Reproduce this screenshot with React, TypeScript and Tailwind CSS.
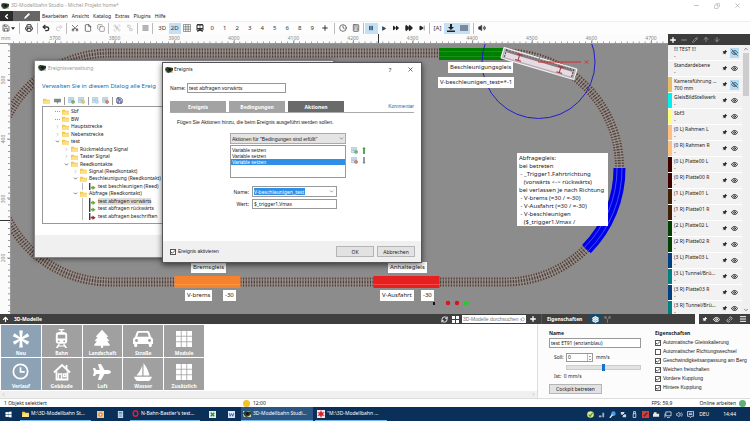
import React, { useState } from "react";
import {
  AlignJustify, ArrowDown, ArrowUp, Calculator, Check, ChevronDown, ChevronLeft, ChevronRight, ChevronUp, Clock,
  Copy, Eye, EyeOff, FastForward, File, Group, Link2, Menu, Minus, Pencil, Plus, Printer, Redo2, RefreshCw,
  Save, Scissors, Search, Settings, SkipForward, Split, Ungroup, Undo2, Volume2, X,
} from "lucide-react";
import { FaCar, FaPlane, FaTree, FaTrainSubway, FaPause, FaPlay, FaForward, FaWindows, FaThumbtack } from "react-icons/fa6";

type Layer = { name: string; sub?: string; color: string; hidden?: boolean };

const LAYERS: Layer[] = [
  { name: "!!! TEST !!!", color: "bg-[#f2f2f2]", hidden: true },
  { name: "Standardebene", color: "bg-[#f2f2f2]" },
  { name: "Kameraführung ...", sub: "700 mm", color: "bg-[#e8bd6a]", hidden: true },
  { name: "GleisBildStellwerk", color: "bg-[#00f0f0]" },
  { name: "Sbf3", color: "bg-[#ffff80]" },
  { name: "(0 L) Rahmen L", color: "bg-[#fdc080]" },
  { name: "(0 R) Rahmen R", color: "bg-[#fdc080]" },
  { name: "(0 L) Platte00 L", color: "bg-[#400000]" },
  { name: "(0 R) Platte00 R", color: "bg-[#400000]" },
  { name: "(1 L) Platte01 L", color: "bg-[#402000]" },
  { name: "(1 R) Platte01 R", color: "bg-[#402000]" },
  { name: "(2 L) Platte02 L", color: "bg-[#004000]" },
  { name: "(2 R) Platte02 R", color: "bg-[#004000]" },
  { name: "(3 L) Platte03 L", color: "bg-[#004080]" },
  { name: "(3 L) Tunnel/Brü...", color: "bg-[#008080]" },
  { name: "(3 R) Platte03 R", color: "bg-[#004080]" },
  { name: "(3 R) Tunnel/Brü...", color: "bg-[#008080]" },
];

type Node = { label: string; pad: string; kind: "folder" | "green" | "red"; open?: boolean; leaf?: boolean; selected?: boolean };

const TREE: Node[] = [
  { label: "Sbf", pad: "pl-[12px]", kind: "folder", leaf: true },
  { label: "BW", pad: "pl-[12px]", kind: "folder", leaf: true },
  { label: "Hauptstrecke", pad: "pl-[12px]", kind: "folder" },
  { label: "Nebenstrecke", pad: "pl-[12px]", kind: "folder" },
  { label: "test", pad: "pl-[12px]", kind: "folder", open: true },
  { label: "Rückmeldung Signal", pad: "pl-[21px]", kind: "folder" },
  { label: "Taster Signal", pad: "pl-[21px]", kind: "folder" },
  { label: "Reedkontakte", pad: "pl-[21px]", kind: "folder", open: true },
  { label: "Signal (Reedkontakt)", pad: "pl-[30px]", kind: "folder" },
  { label: "Beschleunigung (Reedkontakt)", pad: "pl-[30px]", kind: "folder", open: true },
  { label: "test beschleunigen (Reed)", pad: "pl-[39px]", kind: "green", leaf: true },
  { label: "Abfrage (Reedkontakt)", pad: "pl-[30px]", kind: "folder", open: true },
  { label: "test abfragen vorwärts", pad: "pl-[39px]", kind: "green", leaf: true, selected: true },
  { label: "test abfragen rückwärts", pad: "pl-[39px]", kind: "green", leaf: true },
  { label: "test abfragen beschriften", pad: "pl-[39px]", kind: "red", leaf: true },
];

const OPTIONS = [
  { label: "Automatische Gleisskalierung", on: true },
  { label: "Automatischer Richtungswechsel", on: false },
  { label: "Geschwindigkeitsanpassung am Berg", on: true },
  { label: "Weichen freischalten", on: true },
  { label: "Vordere Kupplung", on: true },
  { label: "Hintere Kupplung", on: true },
];

function AppIcon() {
  return (
    <svg viewBox="0 0 8 8" className="w-2 h-2 shrink-0">
      <path d="M0 1h5l3 1v5H1L0 5z" fill="#c9d2bd" />
      <path d="M0 3l2-2 3 .5L8 2v2L6 6 3 7 1 5z" fill="#2d3a2c" />
      <path d="M3 3l2-1 1 2-2 1z" fill="#111" />
    </svg>
  );
}

function FolderIcon() {
  return (
    <svg viewBox="0 0 8 7" className="w-[7px] h-[6px] shrink-0">
      <path d="M0 1h3l1 1h4v5H0z" fill="#f2c744" />
      <path d="M1 3h7v4H0z" fill="#fbe08a" />
    </svg>
  );
}

function EventIcon({ red }: { red: boolean }) {
  return (
    <svg viewBox="0 0 8 8" className="w-[7px] h-[7px] shrink-0">
      <path d="M0 0h1.6v8H0z" fill="#3b3b48" />
      <path d="M2 4.2h2V2.8l3.6 2.6L4 8V6.4H2z" fill={red ? "#b3202c" : "#6aa82e"} />
    </svg>
  );
}

function MiniDoc({ badge }: { badge: string }) {
  return (
    <svg viewBox="0 0 8 8" className="w-[7px] h-[7px] shrink-0">
      <path d="M.5.5h6v6h-6z" fill="#cfe4f2" stroke="#8fb4cc" strokeWidth=".6" />
      <path d="M1.5 2.5h4M1.5 4h3" stroke="#7da3bd" strokeWidth=".5" />
      <circle cx="5.8" cy="5.8" r="2" fill={badge} />
      <path d="M4.8 5.8h2" stroke="#fff" strokeWidth=".7" />
    </svg>
  );
}

function CheckBox({ label, on }: { label: string; on: boolean }) {
  const [checked, setChecked] = useState(on);
  return (
    <label className="flex items-center gap-[2px] h-[9px] text-[5px] leading-[9px] whitespace-nowrap font-['Liberation_Sans',sans-serif]">
      <span className="relative flex w-[6px] h-[6px] shrink-0">
        <input
          type="checkbox"
          checked={checked}
          onChange={(e) => setChecked(e.target.checked)}
          className="appearance-none w-[6px] h-[6px] bg-white border border-[#555]"
        />
        {checked && <Check className="absolute inset-0 w-[6px] h-[6px] text-[#222] pointer-events-none" strokeWidth={3} />}
      </span>
      {label}
    </label>
  );
}

function Tool({ children, active, label }: { children: React.ReactNode; active?: boolean; label: string }) {
  return (
    <button
      aria-label={label}
      className={`flex-1 h-full flex items-center justify-center text-[6px] leading-none ${active ? "bg-[#c3e0f5]" : ""}`}
    >
      {children}
    </button>
  );
}

function Toolbar() {
  const ic = "w-2 h-2";
  return (
    <div className="flex h-[13px] shrink-0 items-center bg-[#fdfdfd] border-t border-[#eee] text-[#333]">
      <div className="flex w-5 h-[11px] border-r border-[#bbb]">
        <Tool label="Speichern"><Save className={ic} /></Tool>
        <button aria-label="Mehr" className="w-2 flex items-center"><svg viewBox="0 0 6 4" className="w-[4px] h-[3px]"><path d="M0 0h6L3 4z" fill="#222" /></svg></button>
      </div>
      <div className="flex w-[18px] h-[11px] border-r border-[#bbb]"><Tool label="Drucken"><Printer className={ic} strokeWidth={3} /></Tool></div>
      <div className="flex w-[29px] h-[11px] px-px border-r border-[#bbb]">
        <Tool label="Rückgängig"><Undo2 className={ic} strokeWidth={4} /></Tool>
        <Tool label="Wiederholen"><Redo2 className="w-2 h-2 text-[#bbb]" /></Tool>
      </div>
      <div className="flex w-[42px] h-[11px] px-px border-r border-[#bbb]">
        <Tool label="Ausschneiden"><Scissors className="w-2 h-2 -rotate-90" /></Tool>
        <Tool label="Kopieren"><File className={ic} /></Tool>
        <Tool label="Einfügen"><Copy className="w-2 h-2 text-[#777]" /></Tool>
      </div>
      <div className="flex w-[29px] h-[11px] px-px border-r border-[#bbb] text-[#bbb]">
        <Tool label="Gruppieren"><Group className={ic} /></Tool>
        <Tool label="Gruppierung aufheben"><Ungroup className={ic} /></Tool>
      </div>
      <div className="flex w-[15px] h-[11px] border-r border-[#bbb]"><Tool label="Ausrichten"><AlignJustify className="w-[7px] h-2 text-[#555]" strokeWidth={3} /></Tool></div>
      <div className="flex w-[182px] h-[11px] px-[3px] border-r border-[#bbb]">
        <Tool label="3D">3D</Tool>
        <Tool label="2D" active>2D</Tool>
        <Tool label="Raster">
          <svg viewBox="0 0 8 8" className={ic} fill="none" stroke="#555" strokeWidth=".6"><path d="M.4.4h7.200v7.200H.4zM.4 2.800h7.200M.4 5.200h7.200M2.800.4v7.200M5.200.4v7.200" /></svg>
        </Tool>
        <Tool label="Zug"><FaTrainSubway className={ic} /></Tool>
        {["0", "1", "2", "3", "4", "5", "6", "8", "9"].map((n) => (
          <Tool key={n} label={n}>{n}</Tool>
        ))}
        <Tool label="Hinzufügen"><Plus className={ic} strokeWidth={3} /></Tool>
      </div>
      <div className="flex w-[29px] h-[11px] px-px border-r border-[#bbb]">
        <Tool label="Uhr"><Clock className={ic} /></Tool>
        <Tool label="Rechner"><Calculator className={ic} /></Tool>
      </div>
      <div className="flex w-[66px] h-[11px] px-px border-r border-[#bbb] text-[#2b4a66]">
        <Tool label="Pause" active><FaPause className="w-[6px] h-[6px]" /></Tool>
        <Tool label="Start"><FaPlay className="w-[4px] h-[5px]" /></Tool>
        <Tool label="Schnell"><FaForward className="w-[6px] h-[6px] text-[#222]" /></Tool>
        <Tool label="Sehr schnell"><FastForward className="w-2 h-2 text-[#222]" fill="currentColor" /></Tool>
        <Tool label="Schritt"><SkipForward className="w-[6px] h-[6px] text-[#222]" fill="currentColor" /></Tool>
      </div>
      <div className="flex w-[44px] h-[11px] pl-px pr-[3px] border-r border-[#bbb]">
        <Tool label="Automatik">[A]</Tool>
        <Tool label="Einrasten" active>
          <svg viewBox="0 0 8 8" className={ic}><path d="M3 0h2v3h2L4 6 1 3h2zM0 6.5h8V8H0z" fill="#222" /></svg>
        </Tool>
        <Tool label="Gleise" active>
          <svg viewBox="0 0 8 8" className={ic}><path d="M0 2h8M0 4h8M0 6h8" stroke="#334" strokeWidth="1" /></svg>
        </Tool>
      </div>
      <div className="flex w-[15px] h-[11px]"><Tool label="Ton"><Volume2 className={ic} fill="currentColor" /></Tool></div>
    </div>
  );
}

// Plan drawing: the oval, the coloured contact sections, the train and its axes
function TrackPlan() {
  return (
    <svg className="absolute inset-0 w-full h-full" aria-hidden="true">
      <g transform="translate(-11 -44)" fill="none">
        <rect x="-4.5" y="53" width="624" height="229" rx="114.5" stroke="#948a86" strokeWidth="11" />
        <rect x="-4.5" y="53" width="624" height="229" rx="114.5" stroke="#4a3f3c" strokeWidth="9" strokeDasharray="1.2 1.5" />
        <rect x="-6.5" y="51" width="628" height="233" rx="116.5" stroke="#a89e9a" strokeWidth=".7" />
        <rect x="-2.5" y="55" width="620" height="225" rx="112.5" stroke="#a89e9a" strokeWidth=".7" />

        <path d="M439 54h66" stroke="#008000" strokeWidth="12" />
        <path d="M439 51.5h66M439 56.5h66" stroke="#2f9c2f" strokeWidth=".6" />
        <path d="M174.5 282h66" stroke="#f5822c" strokeWidth="12" />
        <path d="M174.5 284.5h66" stroke="#ffa45c" strokeWidth=".6" />
        <path d="M373.5 282h66" stroke="#e62020" strokeWidth="12" />
        <path d="M373.5 284.5h66" stroke="#ff6a60" strokeWidth=".6" />
        <path d="M619.5 168A114.5 114.5 0 0 1 586.5 249" stroke="#0000e6" strokeWidth="12" />
        <path d="M622 168A117 117 0 0 1 588.3 250.7M617 168A112 112 0 0 1 584.7 247.2" stroke="#5f6cff" strokeWidth=".7" />

        <g transform="rotate(16.5 539 63.5)">
          <rect x="501" y="58" width="76" height="11" rx="1" fill="#b9afb4" stroke="#f4f2f4" strokeWidth="1.2" />
          <rect x="505" y="59.5" width="68" height="3" fill="#857b7e" />
          <rect x="503" y="62" width="71" height="5" fill="#e6dbe2" />
          <path d="M504 59.5h69" stroke="#555" strokeWidth=".7" strokeDasharray="1.5 1.5" />
          <path d="M515 60.500h6M518 60.500v6M515 66.500h6M558 60.500h6M561 60.500v6M558 66.500h6" stroke="#a8303c" strokeWidth="1" />
          <path d="M504 59v9M574 59v9" stroke="#3d4658" strokeWidth="1" strokeDasharray="2 1" />
        </g>
        <circle cx="538.5" cy="62" r="56.5" stroke="#2020c8" strokeWidth="1" />
        <path d="M539.5 44v18" stroke="#18d818" strokeWidth="1" />
        <path d="M538 62h43M585 60.5l3 3m0-3l-3 3" stroke="#e02a2a" strokeWidth="1" />

        <rect x="433" y="302" width="2" height="3" fill="#111" />
        <circle cx="448" cy="303" r="2.2" fill="#e0101c" />
        <circle cx="457" cy="303" r="2.2" fill="#e0101c" />
        <rect x="464" y="301" width="4.5" height="4" rx="1.5" fill="#10d820" />
      </g>
    </svg>
  );
}

function Note({ place, children }: { place: string; children: React.ReactNode }) {
  return <div className={`absolute bg-white px-[2px] text-[6px] leading-[11px] whitespace-pre text-[#222] ${place}`}>{children}</div>;
}

function RulerTop() {
  const marks = Array.from({ length: 11 }, (_, i) => 3700 + i * 100);
  return (
    <div className="relative h-[10px] shrink-0 bg-[#fbfbfb] border-b border-[#999] overflow-hidden text-[5px] leading-[8px] text-[#888]">
      <svg className="absolute inset-0 w-full h-full" aria-hidden="true">
        <path d="M13 8.5H700" stroke="#777" strokeWidth="2" strokeDasharray=".7 5.26" />
        {marks.map((m, i) => (
          <path key={m} d={`M${55.5 + i * 59.6} 6v4`} stroke="#777" strokeWidth=".7" />
        ))}
        <path d="M378.5 0v10" stroke="#333" strokeWidth="1" />
      </svg>
      <span className="absolute left-px">mm</span>
      {marks.map((m, i) => (
        <span key={m} className="absolute -translate-x-1/2" style={{ left: 55 + i * 59.6 }}>{m}</span>
      ))}
    </div>
  );
}

function RulerLeft() {
  return (
    <div className="relative w-[11px] shrink-0 bg-[#fbfbfb] border-r border-[#999] overflow-hidden text-[5px] leading-[7px] text-[#888]">
      <svg className="absolute inset-0 w-full h-full" aria-hidden="true">
        <path d="M9 0.5V400" stroke="#777" strokeWidth="2" strokeDasharray=".7 5.23" />
        <path d="M7 36h4M7 95h4M7 154h4M7 214h4" stroke="#777" strokeWidth=".7" />
        <path d="M0 176.5h11" stroke="#333" strokeWidth="1" />
      </svg>
      {["500", "400", "300", "200"].map((m, i) => (
        <span key={m} className="absolute left-0 -translate-y-1/2 [writing-mode:vertical-rl] rotate-180" style={{ top: 36 + i * 59.3 }}>{m}</span>
      ))}
    </div>
  );
}

function EventManager() {
  return (
    <section className="absolute left-[23px] top-[16px] w-[300px] h-[198px] flex flex-col bg-white border border-[#888] shadow-[0_1px_5px_rgba(0,0,0,0.5)]">
      <header className="flex items-center gap-[2px] h-[14px] pl-[3px] text-[5px] leading-none text-[#999]">
        <AppIcon />
        <span>Ereignisverwaltung</span>
      </header>
      <h2 className="pl-[7px] mt-[6px] text-[6px] leading-[10px] text-[#1a6aa8] whitespace-nowrap">Verwalten Sie in diesem Dialog alle Ereig</h2>
      <div className="flex items-center gap-[3px] h-[11px] pl-2 mt-[4px]">
        <FolderIcon />
        <svg viewBox="0 0 8 7" className="w-[7px] h-[6px] ml-px"><path d="M0 1h8v4H5L4 7 3 5H0z" fill="#7e8a84" /></svg>
        <span className="w-px h-2 bg-[#999]" />
        <MiniDoc badge="#4f9a3d" />
        <MiniDoc badge="#d8b13c" />
        <span className="w-px h-2 bg-[#999]" />
        <MiniDoc badge="#a9cbe4" />
        <MiniDoc badge="#cf5037" />
        <span className="w-px h-2 bg-[#999]" />
        <Save className="w-[7px] h-[7px] text-[#303a78]" strokeWidth={3} />
      </div>
      <ul className="flex flex-col h-[118px] ml-[7px] mr-2 pt-px pb-[3px] border border-[#999] text-[5px] leading-[7px]">
        {TREE.map((n) => (
          <li key={n.label} className={`flex flex-1 items-center gap-[2px] ${n.pad}`}>
            {!n.leaf && (n.open
              ? <ChevronDown className="w-[5px] h-[5px] text-[#222]" strokeWidth={3} />
              : <ChevronRight className="w-[5px] h-[5px] text-[#888]" />)}
            {n.leaf && n.kind === "folder" && <span className="w-[5px] border-t border-dotted border-[#999]" />}
            {n.leaf && n.kind !== "folder" && <span className="w-[5px] h-full border-l border-[#bbb]" />}
            {n.kind === "folder" ? <FolderIcon /> : <EventIcon red={n.kind === "red"} />}
            <span className={n.selected ? "bg-[#dcdcdc]" : ""}>{n.label}</span>
          </li>
        ))}
      </ul>
      <footer className="mt-auto h-[22px] bg-[#f0f0f0]" />
    </section>
  );
}

function EventDialog() {
  const [name, setName] = useState("test abfragen vorwärts");
  const [variable, setVariable] = useState("V-beschleunigen_test");
  const [value, setValue] = useState("$_trigger1.Vmax");
  return (
    <section className="absolute left-[151px] top-[18px] w-[260px] h-[201px] flex flex-col bg-white border border-[#555] shadow-[0_2px_6px_rgba(0,0,0,0.6)] text-[5px] leading-[8px]">
      <header className="flex items-center h-[13px] pl-[2px] pr-[7px] text-[6px] leading-none">
        <AppIcon />
        <span className="ml-px flex-1 text-[5px]">Ereignis</span>
        <button aria-label="Hilfe" className="w-2 mr-[13px]">?</button>
        <button aria-label="Schließen"><X className="w-[7px] h-[7px]" /></button>
      </header>
      <div className="flex items-center mt-[7px] pl-[7px]">
        <label htmlFor="event-name" className="w-[17px]">Name:</label>
        <input id="event-name" value={name} onChange={(e) => setName(e.target.value)} className="w-[99px] h-[10px] px-px border border-[#999]" />
      </div>
      <nav className="flex items-end gap-[3px] mx-[7px] mt-2 h-3 border-b border-[#aaa] text-[5px] font-bold text-white">
        <button className="w-14 h-[11px] bg-[#a3a3a3]">Ereignis</button>
        <button className="w-14 h-[11px] bg-[#a3a3a3]">Bedingungen</button>
        <button className="w-14 h-[11px] bg-[#6a6a6a]">Aktionen</button>
        <a href="#kommentar" className="ml-auto h-[10px] font-normal text-[#1a6aa8] font-['Liberation_Sans',sans-serif]">Kommentar</a>
      </nav>
      <p className="pl-[14px] mt-[5px] whitespace-nowrap font-['Liberation_Sans',sans-serif]">Fügen Sie Aktionen hinzu, die beim Ereignis ausgeführt werden sollen.</p>
      <div className="flex gap-2 pl-[67px] mt-[7px]">
        <div className="w-[116px] font-['Liberation_Sans',sans-serif]">
          <div className="relative">
            <select aria-label="Aktionen" className="appearance-none block w-full h-[11px] pl-px bg-[#e4e4e4] border border-[#aaa] leading-[8px]">
              <option>Aktionen für "Bedingungen sind erfüllt"</option>
            </select>
            <ChevronDown className="absolute right-[2px] top-[3px] w-[5px] h-[5px] pointer-events-none" />
          </div>
          <ul className="mt-px h-[33px] pt-px border border-[#999] leading-[6px]">
            <li className="pl-px">Variable setzen</li>
            <li className="pl-px">Variable setzen</li>
            <li className="pl-px bg-[#2f8fe6] text-white">Variable setzen</li>
          </ul>
        </div>
        <div className="grid grid-cols-2 content-start gap-x-1 gap-y-[3px] pt-[14px] -ml-[3px]">
          <button aria-label="Aktion hinzufügen"><MiniDoc badge="#4f9a3d" /></button>
          <button aria-label="Nach oben"><svg viewBox="0 0 4 8" className="w-[4px] h-[7px]"><path d="M2 0l2 2H3v6H1V2H0z" fill="#3f9a3a" /></svg></button>
          <button aria-label="Aktion entfernen"><MiniDoc badge="#cf5037" /></button>
          <button aria-label="Nach unten"><svg viewBox="0 0 4 8" className="w-[4px] h-[7px]"><path d="M2 8L0 6h1V0h2v6h1z" fill="#8a8a8a" /></svg></button>
        </div>
      </div>
      <div className="grid grid-cols-[86px_85px] gap-x-[3px] gap-y-[2px] items-center mt-[8px]">
        <label htmlFor="var-name" className="text-right">Name:</label>
        <div className="flex items-center h-[11px] px-px border border-[#999]">
          <input id="var-name" value={variable} onChange={(e) => setVariable(e.target.value)} className="w-[51px] h-[7px] bg-[#2f8fe6] text-white" />
          <button aria-label="Variable wählen" className="ml-auto mr-px"><ChevronDown className="w-[5px] h-[5px]" /></button>
        </div>
        <label htmlFor="var-value" className="text-right">Wert:</label>
        <input id="var-value" value={value} onChange={(e) => setValue(e.target.value)} className="h-[10px] px-px border border-[#999]" />
      </div>
      <footer className="mt-auto flex items-center gap-[3px] h-[21px] pl-[7px] pr-[6px] bg-[#f0f0f0]">
        <CheckBox label="Ereignis aktivieren" on />
        <button className="ml-auto w-[38px] h-[11px] bg-[#e2e2e2] border border-[#b5b5b5]">OK</button>
        <button className="w-[38px] h-[11px] bg-[#e2e2e2] border border-[#b5b5b5]">Abbrechen</button>
      </footer>
    </section>
  );
}

function LayerPanel() {
  return (
    <aside className="w-[82px] shrink-0 flex flex-col min-h-0 bg-[#f0f0f0]">
      <div className="flex items-center gap-[3px] h-[11px] shrink-0 pl-px bg-[#3c3c3c] text-[#bbb]">
        <button aria-label="Ebene hinzufügen"><Plus className="w-2 h-2 text-white" strokeWidth={4} /></button>
        <button aria-label="Ebene löschen"><Minus className="w-2 h-2" /></button>
        <button aria-label="Umbenennen"><Pencil className="w-2 h-[6px]" /></button>
        <button aria-label="Nach oben"><ArrowUp className="w-2 h-[7px]" /></button>
        <button aria-label="Nach unten"><ArrowDown className="w-2 h-[7px]" /></button>
      </div>
      <div className="flex flex-1 min-h-0">
        <ul className="flex-1 min-w-0 overflow-hidden">
          {LAYERS.map((l) => (
            <li key={l.name} className="flex items-center h-4 bg-[#f2f2f2] border-b border-white">
              <span className={`w-[4px] h-full mr-[2px] ${l.color}`} />
              <div className="flex-1 min-w-0 text-[5px] leading-[7px] whitespace-nowrap">
                <p>{l.name}</p>
                <p>{l.sub ?? "-"}</p>
              </div>
              <button aria-label="Anheften"><FaThumbtack className="w-[5px] h-[5px] mr-[3px] rotate-45 text-[#222]" /></button>
              <button aria-label="Sichtbarkeit" className={`flex items-center justify-center w-[9px] h-[10px] mr-[3px] ${l.hidden ? "bg-[#b5dcf5]" : ""}`}>
                {l.hidden ? <EyeOff className="w-[7px] h-[7px]" /> : <Eye className="w-[7px] h-[7px] text-[#222]" strokeWidth={3} />}
              </button>
            </li>
          ))}
        </ul>
        <div className="w-[8px] flex flex-col items-center justify-between py-px bg-[#f0f0f0]">
          <div className="flex flex-col items-center gap-px">
            <ChevronUp className="w-[6px] h-[6px]" />
            <span className="w-[6px] h-[43px] bg-[#cdcdcd]" />
          </div>
          <ChevronDown className="w-[6px] h-[6px]" />
        </div>
      </div>
    </aside>
  );
}

function ModuleIcon() {
  return (
    <svg viewBox="0 0 16 16" className="w-4 h-4" fill="currentColor">
      {[0, 5.6, 11.2].map((y) => [0, 5.6, 11.2].map((x) => <rect key={`${x}-${y}`} x={x} y={y} width="4.8" height="4.8" />))}
    </svg>
  );
}

const TILES = [
  {
    label: "Neu", blue: true,
    icon: (
      <svg viewBox="0 0 18 18" className="w-[18px] h-[18px]" fill="currentColor">
        <g id="petal"><path d="M7.2.5h3.600L9.900 8.500H8.100z" /><path d="M7.200 17.500h3.600L9.900 9.500H8.100z" /></g>
        <use href="#petal" transform="rotate(60 9 9)" />
        <use href="#petal" transform="rotate(120 9 9)" />
        <circle cx="9" cy="9" r="2" />
      </svg>
    ),
  },
  {
    label: "Bahn",
    icon: <svg viewBox="0 0 18 20" className="w-[17px] h-[19px]" fill="currentColor"><path fillRule="evenodd" d="M6 0h6v1.200h-2V3h1c2.500 0 4 1 4 3v7c0 1.500-1 2.500-2.500 2.500h-7C4 15.500 3 14.500 3 13V6c0-2 1.500-3 4-3h1V1.200H6zM5 6v4h8V6zm.2 6.200v1.600H7v-1.600zm5.800 0v1.600h1.800v-1.600z" /><path d="M5.500 16h2L5 20H3zm5 0h2l2.500 4h-2zM6 17.500h6v1H6z" /></svg>,
  },
  { label: "Landschaft", icon: <FaTree className="w-[18px] h-[18px]" /> },
  {
    label: "Straße",
    icon: <svg viewBox="0 0 20 16" className="w-5 h-4" fill="currentColor"><path fillRule="evenodd" d="M5.500 0h9c1 0 1.800.6 2 1.500L18 6c1.200.6 2 1.500 2 2.800V13h-1.200v1.500c0 2-3 2-3 0V13H4.200v1.500c0 2-3 2-3 0V13H0V8.800C0 7.500.8 6.600 2 6l1.500-4.500C3.800.6 4.500 0 5.500 0zM5.600 1.800L4.200 5.800h11.600l-1.400-4zM3.500 8a1.500 1.500 0 1 0 .01 0zm13 0a1.500 1.500 0 1 0 .01 0z" /></svg>,
  },
  { label: "Module", icon: <ModuleIcon /> },
  {
    label: "Verlauf", blue: true,
    icon: <svg viewBox="0 0 18 18" className="w-[17px] h-[17px]" fill="none" stroke="currentColor" strokeWidth="1.8"><circle cx="9" cy="9" r="7.6" /><path d="M9 4.500V9.500h4.500" /></svg>,
  },
  {
    label: "Gebäude",
    icon: <svg viewBox="0 0 18 18" className="w-[18px] h-[18px]" fill="none" stroke="currentColor"><path d="M1 9.500L9 2l8 7.500" strokeWidth="2" /><path d="M3.500 8.500v8h11v-8M13.500 2v4" strokeWidth="1.8" /><path d="M5.500 16v-5h3v5M10.500 11h2.500v2.500h-2.500z" strokeWidth="1.4" /></svg>,
  },
  { label: "Luft", icon: <FaPlane className="w-[18px] h-[18px]" /> },
  {
    label: "Wasser",
    icon: <svg viewBox="0 0 18 18" className="w-[18px] h-[18px]" fill="currentColor"><path d="M9.500 0c3 4 5 8 6 12.500h-6zM8.300 2.500v10H2.500C5 9.500 7 6.500 8.300 2.500zM0 13.700h18c-1 2.500-2 4.300-4 4.300H4c-2 0-3-1.800-4-4.300z" /></svg>,
  },
  { label: "Zusätzlich", icon: <ModuleIcon /> },
];

function ModelPanel() {
  return (
    <div className="flex-1 flex flex-col bg-white border-r border-[#ddd]">
      <div className="grid grid-cols-5 gap-px w-[204px] pl-px pt-px">
        {TILES.map((t) => (
          <button key={t.label} className={`flex flex-col items-center h-8 pt-[2px] text-white ${t.blue ? "bg-[#8ea2b6]" : "bg-[#a0a0a0]"}`}>
            <span className="flex-1 flex items-center">{t.icon}</span>
            <span className="text-[5px] leading-[7px] font-bold">{t.label}</span>
          </button>
        ))}
      </div>
      <div className="mt-auto h-[7px] flex items-center justify-between px-px bg-[#f0f0f0] text-[#999]">
        <ChevronLeft className="w-[5px] h-[5px]" />
        <ChevronRight className="w-[5px] h-[5px]" />
      </div>
    </div>
  );
}

function PropertyPanel() {
  const [speed, setSpeed] = useState("0");
  return (
    <div className="w-[212px] shrink-0 flex pl-[11px] pt-[5px] bg-[#fcfcfc] text-[5px] leading-[9px]">
      <div className="w-[106px]">
        <label htmlFor="obj-name" className="block font-bold">Name</label>
        <input id="obj-name" defaultValue="test ET91 (enzianblau)" className="block w-[92px] h-[10px] px-px border border-[#999] bg-white" />
        <div className="flex items-center mt-[5px] pl-[5px]">
          <label htmlFor="speed" className="w-[12px]">Soll:</label>
          <div className="flex w-[27px] h-[9px] border border-[#999] bg-white">
            <input id="speed" value={speed} onChange={(e) => setSpeed(e.target.value)} className="w-5 px-px" />
            <span className="flex flex-col justify-center w-[6px] border-l border-[#bbb]">
              <button aria-label="Mehr"><ChevronUp className="block w-[4px] h-[3px]" strokeWidth={4} /></button>
              <button aria-label="Weniger"><ChevronDown className="block w-[4px] h-[3px]" strokeWidth={4} /></button>
            </span>
          </div>
          <span className="ml-[3px]">mm/s</span>
        </div>
        <input
          type="range"
          aria-label="Geschwindigkeit"
          defaultValue={50}
          className="appearance-none block w-[75px] h-[5px] ml-[17px] mt-[3px] bg-[#e2e2e2] border border-[#ccc] [&::-webkit-slider-thumb]:appearance-none [&::-webkit-slider-thumb]:w-[3px] [&::-webkit-slider-thumb]:h-[7px] [&::-webkit-slider-thumb]:bg-[#1673c9]"
        />
        <p className="mt-[2px] pl-[5px] h-[9px]">Ist:&nbsp; 0 mm/s</p>
        <button className="block w-[53px] h-[10px] mt-[3px] leading-[8px] bg-[#e2e2e2] border border-[#b5b5b5]">Cockpit betreten</button>
      </div>
      <fieldset>
        <legend className="font-bold">Eigenschaften</legend>
        {OPTIONS.map((o) => (
          <CheckBox key={o.label} label={o.label} on={o.on} />
        ))}
      </fieldset>
    </div>
  );
}

function PanelHeader() {
  return (
    <div className="flex h-[10px] shrink-0 bg-white text-white text-[5px] leading-[10px] font-bold">
      <div className="flex-1 flex items-center bg-[#3f3f3f] pl-[2px]">
        <ArrowUp className="w-[7px] h-[7px]" strokeWidth={4} />
        <h3 className="ml-[5px]">3D-Modelle</h3>
        <button aria-label="Aktualisieren" className="ml-auto mr-1"><RefreshCw className="w-[7px] h-[7px]" strokeWidth={3} /></button>
        <button aria-label="Kacheln" className="mr-[3px]">
          <svg viewBox="0 0 7 7" className="w-[7px] h-[7px]" fill="#fff"><path d="M0 0h3v3H0zM4 0h3v3H4zM0 4h3v3H0zM4 4h3v3H4z" /></svg>
        </button>
        <div className="flex items-center w-[64px] h-2 bg-white">
          <input aria-label="3D-Modelle durchsuchen" placeholder="3D-Modelle durchsuchen" className="min-w-0 flex-1 h-2 pl-px font-normal font-['Liberation_Sans',sans-serif] placeholder:text-[#777]" />
          <Search className="w-[5px] h-[5px] mr-px text-[#666] -scale-x-100" />
        </div>
        <button aria-label="Hinzufügen" className="ml-[3px] mr-1"><Plus className="w-2 h-2" strokeWidth={4} /></button>
      </div>
      <div className="flex items-center w-[154px] pl-[5px] border-l border-[#555] bg-[#3f3f3f]">
        <h3>Eigenschaften</h3>
        <button aria-label="Einstellungen" className="ml-[8px] px-[2px] h-full bg-[#174a66]"><Settings className="w-[7px] h-[7px]" strokeWidth={4} /></button>
        <button aria-label="Verteilung" className="ml-[3px]"><Split className="w-[7px] h-[7px] text-[#aaa]" /></button>
      </div>
      <div className="flex items-center justify-around w-[51px] ml-1 bg-[#3f3f3f]">
        <FaThumbtack className="w-[5px] h-[5px] rotate-45" />
        <Eye className="w-[7px] h-[7px]" strokeWidth={3} />
        <Link2 className="w-[7px] h-[7px] -rotate-45" />
        <Menu className="w-2 h-2" strokeWidth={3} />
      </div>
    </div>
  );
}

function TaskItem({ icon, label, width, active }: { icon: React.ReactNode; label: string; width: string; active?: boolean }) {
  return (
    <button className={`flex items-center gap-[2px] h-full pl-[2px] border-b border-[#76b9ed] whitespace-nowrap ${width} ${active ? "bg-[#2a5684]" : ""}`}>
      {icon}
      {label}
    </button>
  );
}

function Taskbar() {
  return (
    <footer className="flex items-center h-[14px] shrink-0 bg-[#0a2f59] text-white text-[5px] leading-none">
      <button aria-label="Start" className="w-5 flex pl-[5px]"><FaWindows className="w-[7px] h-[7px]" /></button>
      <TaskItem width="w-[71px]" icon={<FolderIcon />} label="M:\3D-Modellbahn St..." />
      <div className="flex items-center justify-around w-[39px]">
        <svg viewBox="0 0 8 8" className="w-[7px] h-[7px]"><path d="M0 0h8v8H0z" fill="#e4c9a0" /><circle cx="4" cy="4" r="2.6" fill="#f08a1c" /><circle cx="4" cy="4" r="1" fill="#fff" /></svg>
        <svg viewBox="0 0 8 8" className="w-[7px] h-[7px]"><path d="M1 0h6v8H1z" fill="#c9dcea" /><path d="M2 1h4v2H2z" fill="#5a8cb0" /><path d="M2 4.500h4M2 6h4" stroke="#5a7c98" strokeDasharray="1 .5" /></svg>
      </div>
      <TaskItem
        width="w-[70px]"
        icon={<svg viewBox="0 0 8 8" className="w-[7px] h-[7px]"><ellipse cx="4" cy="4" rx="2.7" ry="3.2" fill="none" stroke="#e0202c" strokeWidth="1.6" /></svg>}
        label="N-Bahn-Bastler's test..."
      />
      <div className="flex items-center justify-around flex-none w-[41px] pl-[3px]">
        <svg viewBox="0 0 8 8" className="w-[7px] h-[7px]"><path d="M0 0h8v8H0z" fill="#dff0e0" /><path d="M2 2l4 4M6 2L2 6" stroke="#1f8a3c" strokeWidth="1.5" /></svg>
        <svg viewBox="0 0 8 8" className="w-[7px] h-[7px]"><path d="M0 0h8v8H0z" fill="#d8e6f8" /><path d="M1.500 2.500l1 3.500L4 3l1.500 3 1-3.500" fill="none" stroke="#2456a8" /></svg>
      </div>
      <TaskItem width="w-[72px]" icon={<AppIcon />} label="3D-Modellbahn Studi..." active />
      <span className="w-[2px]" />
      <TaskItem
        width="w-[72px]"
        icon={<svg viewBox="0 0 8 8" className="w-[8px] h-[8px]"><path d="M0 0h8v8H0z" fill="#f4e4e4" /><path d="M4 0l1 2.500L7.500 2 6 4l1.500 2L5 5.500 4 8 3 5.500.5 6 2 4 .5 2 3 2.500z" fill="#d8202c" /></svg>}
        label={'"M:\\3D-Modellbahn ...'}
      />
      <div className="ml-auto mr-[5px] flex items-center gap-[4px]">
        <svg viewBox="0 0 8 8" className="w-[7px] h-[7px]"><circle cx="4" cy="4" r="3.8" fill="#d8e88a" /><path d="M2 4l1.500 2L6.500 2" stroke="#3a8a2c" fill="none" strokeWidth="1.3" /></svg>
        <svg viewBox="0 0 8 8" className="w-[7px] h-[7px]"><path d="M1 5h3v2H1zM5 2h2v5H5z" fill="#9fb4c8" /></svg>
        <svg viewBox="0 0 8 8" className="w-[7px] h-[7px]"><circle cx="5" cy="3" r="2.6" fill="#4a9af0" /><path d="M1 8l3-4" stroke="#dfe9f4" strokeWidth="1.5" /></svg>
        <svg viewBox="0 0 8 8" className="w-[7px] h-[7px]"><path d="M1 1h4v3H1zM3 4h4v3H3z" fill="#d0d8e0" /><path d="M1 7l6-6" stroke="#222" /></svg>
        <svg viewBox="0 0 8 8" className="w-[7px] h-[7px]" fill="none" stroke="#fff" strokeWidth=".8"><path d="M2.500 3h3v4.500h-3zM3 3V.5h2V3" /></svg>
        <svg viewBox="0 0 8 8" className="w-[7px] h-[7px]"><path d="M0 0h8v8H0z" fill="#d83a3a" /><path d="M2 6l4-4" stroke="#333" strokeWidth="1.5" /></svg>
        <svg viewBox="0 0 8 8" className="w-[7px] h-[7px]"><path d="M0 3h7v3.500H0zM1 1.500h3V3H1z" fill="#e8e8e8" /></svg>
        <svg viewBox="0 0 8 8" className="w-[8px] h-[7px]" fill="none" stroke="#fff" strokeWidth=".8"><path d="M1.500 1h6v4.500h-6zM3 7.500h3M.5 3v4.500" /></svg>
        <Volume2 className="w-[7px] h-[7px]" />
        <svg viewBox="0 0 8 8" className="w-[7px] h-[7px]" fill="none" stroke="#fff" strokeWidth=".8"><path d="M.5.5h7v5.500H5L4 7.500 3 6H.5zM2 2.500h4M2 4h4" /></svg>
        <span className="ml-px">DEU</span>
        <time className="ml-[10px] mr-[9px]">14:44</time>
      </div>
    </footer>
  );
}

export default function App() {
  return (
    <div className="h-screen flex flex-col overflow-hidden bg-white text-[#1a1a1a] font-['Noto_Sans',sans-serif] [font-variant-ligatures:none]">
      <header className="flex items-center h-[11px] shrink-0 pl-px pr-[9px] text-[#999]">
        <AppIcon />
        <h1 className="ml-[2px] flex-1 text-[5px] leading-none">3D-Modellbahn Studio - Michel Projekt home*</h1>
        <div className="flex gap-[14px]">
          <button aria-label="Minimieren"><Minus className="w-[7px] h-[7px]" /></button>
          <button aria-label="Wiederherstellen"><Copy className="w-[6px] h-[6px] -scale-x-100" /></button>
          <button aria-label="Schließen"><X className="w-[7px] h-[7px]" /></button>
        </div>
      </header>
      <nav className="flex h-[10px] shrink-0 items-center gap-1 text-[5px] leading-none">
        <div className="flex h-full mr-[-2px]">
          <button aria-label="Zurück" className="w-[13px] flex items-center justify-center bg-[#2b2b2b] text-white"><ChevronLeft className="w-[7px] h-[7px]" strokeWidth={5} /></button>
          <button aria-label="Bearbeiten" className="w-[27px] flex items-center justify-center bg-[#666] text-white"><Pencil className="w-[6px] h-[6px]" fill="currentColor" /></button>
        </div>
        {["Bearbeiten", "Ansicht", "Katalog", "Extras", "Plugins", "Hilfe"].map((m) => (
          <button key={m}>{m}</button>
        ))}
      </nav>
      <Toolbar />
      <main className="flex flex-1 min-h-0">
        <div className="flex-1 min-w-0 flex flex-col">
          <RulerTop />
          <div className="flex flex-1 min-h-0">
            <RulerLeft />
            <div className="relative flex-1 overflow-hidden bg-[#8c8c8c]">
              <TrackPlan />
              <Note place="left-[437px] top-[18px]">Beschleunigungsgleis</Note>
              <Note place="left-[427px] top-[33px]">V-beschleunigen_test=*-1</Note>
              <Note place="left-[180px] top-[218px]">Bremsgleis</Note>
              <Note place="left-[174px] top-[246px]">V-brems</Note>
              <Note place="left-[212px] top-[246px]">-30</Note>
              <Note place="left-[377px] top-[218px]">Anhaltegleis</Note>
              <Note place="left-[369px] top-[246px]">V-Ausfahrt</Note>
              <Note place="left-[410px] top-[246px]">-30</Note>
              <div className="absolute left-[506px] top-[109px] w-[91px] pl-[2px] pt-px bg-white text-[6px] leading-[8px] whitespace-pre text-[#222]">
                <p>Abfragegleis:</p>
                <p>bei betreten</p>
                <p> - _Trigger1.Fahrtrichtung</p>
                <p>   (vorwärts &lt;-&gt; rückwärts)</p>
                <p>bei verlassen je nach Richtung</p>
                <p> - V-brems (=30 / =-30)</p>
                <p> - V-Ausfahrt (=30 / =-30)</p>
                <p> - V-beschleunigen</p>
                <p>   ($_trigger1.Vmax /</p>
              </div>
              <EventManager />
              <EventDialog />
            </div>
          </div>
        </div>
        <LayerPanel />
      </main>
      <PanelHeader />
      <div className="flex h-[74px] shrink-0">
        <ModelPanel />
        <PropertyPanel />
      </div>
      <div className="flex items-center h-[9px] shrink-0 px-1 border-t border-[#ddd] text-[5px] leading-none">
        <span className="w-[239px]">1 Objekt selektiert</span>
        <span className="w-[7px] h-[7px] rounded-full bg-[#f0c22c]" />
        <span className="ml-[3px]">12:00</span>
        <span className="ml-auto mr-[27px]">FPS: 59,9</span>
        <span>Online arbeiten</span>
        <span className="ml-[3px] w-[7px] h-[7px] rounded-full bg-[#5fae7c]" />
      </div>
      <Taskbar />
    </div>
  );
}
